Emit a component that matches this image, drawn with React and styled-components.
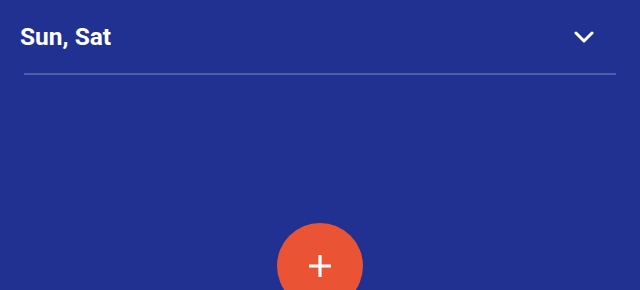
import React from 'react'
import styled, { createGlobalStyle } from 'styled-components'

const GlobalStyle = createGlobalStyle`
  html, body {
    margin: 0;
    padding: 0;
    background: #213191;
    font-family: Roboto, "Liberation Sans", sans-serif;
  }
`

const Screen = styled.div`
  height: 290px;
  overflow: hidden;
  background: #213191;
  display: flex;
  flex-direction: column;
`

const Header = styled.div`
  height: 73px;
  flex-shrink: 0;
  padding: 0 44px 0 20px;
  display: flex;
  align-items: center;
  justify-content: space-between;
`

const Title = styled.h1`
  margin: 2px 0 0;
  color: #ffffff;
  font-size: 24.5px;
  font-weight: 700;
  line-height: 1;
`

const Toggle = styled.button`
  border: none;
  background: none;
  padding: 0;
  width: 24px;
  height: 24px;
  display: flex;
  align-items: center;
  justify-content: center;
  cursor: pointer;
`

const Divider = styled.div`
  height: 2px;
  flex-shrink: 0;
  margin: 0 24px;
  background: rgba(255, 255, 255, 0.22);
`

const Body = styled.div`
  flex: 1;
  min-height: 0;
  display: flex;
  justify-content: center;
`

const Fab = styled.button`
  margin-top: 148px;
  width: 86px;
  height: 86px;
  flex-shrink: 0;
  border: none;
  border-radius: 50%;
  background: #ea5435;
  display: flex;
  align-items: center;
  justify-content: center;
  cursor: pointer;
`

export default function App() {
  return (
    <>
      <GlobalStyle />
      <Screen>
        <Header>
          <Title>Sun, Sat</Title>
          <Toggle>
            <svg width="20" height="12" viewBox="0 0 20 12">
              <path d="M2 2 L10 10 L18 2" fill="none" stroke="#fff" strokeWidth="3" strokeLinecap="round" strokeLinejoin="round" />
            </svg>
          </Toggle>
        </Header>
        <Divider />
        <Body>
          <Fab>
            <svg width="24" height="24" viewBox="0 0 24 24">
              <path d="M12 1 V23 M1 12 H23" stroke="#fff" strokeWidth="3.2" />
            </svg>
          </Fab>
        </Body>
      </Screen>
    </>
  )
}
